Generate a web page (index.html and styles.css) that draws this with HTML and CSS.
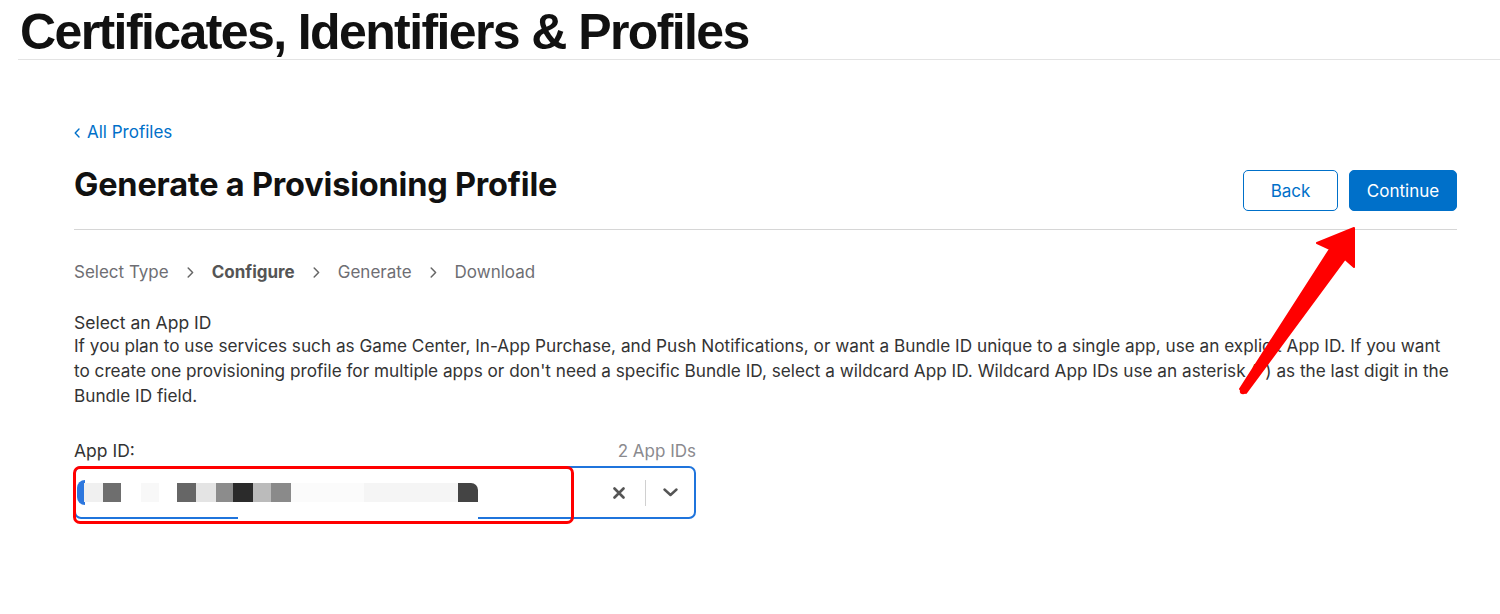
FILE: index.html
```html
<!DOCTYPE html>
<html lang="en">
<head>
<meta charset="utf-8">
<title>Generate a Provisioning Profile</title>
<link rel="stylesheet" href="styles.css">
</head>
<body>
<div class="page">
  <header class="top">
    <h1 class="top-title">Certificates, Identifiers &amp; Profiles</h1>
  </header>

  <main class="main">
    <a class="back-link" href="#">
      <svg class="back-chev" width="6" height="10" viewBox="0 0 6 10"><path d="M5 1 L1.2 5 L5 9" fill="none" stroke="#0070c9" stroke-width="1.4" stroke-linecap="round" stroke-linejoin="round"/></svg>
      All Profiles
    </a>

    <div class="title-row">
      <h2 class="page-title">Generate a Provisioning Profile</h2>
      <div class="actions">
        <button class="btn btn-outline">Back</button>
        <button class="btn btn-primary">Continue</button>
      </div>
    </div>

    <nav class="steps">
      <span class="step">Select Type</span>
      <svg class="step-chev" width="7" height="11" viewBox="0 0 7 11"><path d="M1.2 1 L5.6 5.5 L1.2 10" fill="none" stroke="#666" stroke-width="1.5" stroke-linecap="round" stroke-linejoin="round"/></svg>
      <span class="step step-current">Configure</span>
      <svg class="step-chev" width="7" height="11" viewBox="0 0 7 11"><path d="M1.2 1 L5.6 5.5 L1.2 10" fill="none" stroke="#666" stroke-width="1.5" stroke-linecap="round" stroke-linejoin="round"/></svg>
      <span class="step">Generate</span>
      <svg class="step-chev" width="7" height="11" viewBox="0 0 7 11"><path d="M1.2 1 L5.6 5.5 L1.2 10" fill="none" stroke="#666" stroke-width="1.5" stroke-linecap="round" stroke-linejoin="round"/></svg>
      <span class="step">Download</span>
    </nav>

    <section class="section">
      <h3 class="section-title">Select an App ID</h3>
      <p class="section-text">If you plan to use services such as Game Center, In-App Purchase, and Push Notifications, or want a Bundle ID unique to a single app, use an explicit App ID. If you want to create one provisioning profile for multiple apps or don't need a specific Bundle ID, select a wildcard App ID. Wildcard App IDs use an asterisk (*) as the last digit in the Bundle ID field.</p>
    </section>

    <div class="field">
      <div class="field-head">
        <label class="field-label">App ID:</label>
        <span class="field-count">2 App IDs</span>
      </div>
      <div class="select">
        <div class="select-value">
          <span class="chip-edge"></span>
          <span class="px" style="width:19px;background:#f0f0f0"></span>
          <span class="px" style="width:18px;background:#6e6e6e"></span>
          <span class="px" style="width:20px;background:#fff"></span>
          <span class="px" style="width:18px;background:#f8f8f8"></span>
          <span class="px" style="width:18px;background:#fff"></span>
          <span class="px" style="width:19px;background:#666"></span>
          <span class="px" style="width:20px;background:#e4e4e4"></span>
          <span class="px" style="width:17px;background:#8c8c8c"></span>
          <span class="px" style="width:20px;background:#2b2b2b"></span>
          <span class="px" style="width:18px;background:#bbb"></span>
          <span class="px" style="width:20px;background:#8a8a8a"></span>
          <span class="px" style="width:73px;background:#fbfbfb"></span>
          <span class="px" style="width:94px;background:#f5f5f5"></span>
          <span class="px px-end" style="width:20px;background:#444"></span>
        </div>
        <div class="select-tools">
          <svg class="clear-icon" width="12" height="12" viewBox="0 0 12 12"><path d="M1.5 1.5 L10.5 10.5 M10.5 1.5 L1.5 10.5" stroke="#555" stroke-width="2.6" stroke-linecap="round"/></svg>
          <span class="tool-sep"></span>
          <svg class="drop-icon" width="15" height="9" viewBox="0 0 15 9"><path d="M1.5 1.5 L7.5 7 L13.5 1.5" fill="none" stroke="#555" stroke-width="2.4" stroke-linecap="round" stroke-linejoin="round"/></svg>
        </div>
        <span class="redact-bottom"></span>
      </div>
    </div>
  </main>

  <span class="mark-box"></span>
  <svg class="mark-arrow" width="1500" height="614" viewBox="0 0 1500 614">
    <polygon points="1354,228 1317,243 1330,249 1240,389 1246,393 1345,259 1354,267" fill="#ff0000" stroke="#ff0000" stroke-width="2" stroke-linejoin="round"/>
    <circle cx="1243" cy="391" r="3.2" fill="#ff0000"/>
  </svg>
</div>
</body>
</html>
```

FILE: styles.css
```css
* { box-sizing: border-box; }

html, body {
  margin: 0;
  padding: 0;
  background: #fff;
}

body {
  font-family: Inter, "Liberation Sans", Arial, sans-serif;
  color: #1d1d1f;
  -webkit-font-smoothing: antialiased;
}

.page {
  position: relative;
  width: 1500px;
  height: 614px;
  overflow: hidden;
}

/* top header */
.top {
  margin-left: 18px;
  height: 60px;
  border-bottom: 1px solid #e3e3e3;
}

.top-title {
  margin: 0;
  padding: 5px 0 0 2px;
  font-family: "Liberation Sans", Arial, sans-serif;
  font-weight: 700;
  font-size: 50px;
  line-height: 54px;
  letter-spacing: -1.6px;
  color: #111;
}

/* main */
.main {
  margin-left: 74px;
  width: 1383px;
}

.back-link {
  display: inline-flex;
  align-items: center;
  gap: 7px;
  margin-top: 62px;
  font-size: 17px;
  line-height: 20px;
  color: #0070c9;
  text-decoration: none;
}

.back-chev { margin-top: 2px; }

.title-row {
  display: flex;
  justify-content: space-between;
  align-items: flex-start;
  margin-top: 28px;
  padding-bottom: 18px;
  border-bottom: 1px solid #d6d6d6;
}

.page-title {
  margin: 0;
  font-size: 32.5px;
  line-height: 30px;
  font-weight: 700;
  letter-spacing: -0.2px;
  color: #111;
}

.actions {
  display: flex;
  gap: 11px;
}

.btn {
  height: 41px;
  border-radius: 5px;
  font-family: Inter, "Liberation Sans", Arial, sans-serif;
  font-size: 17px;
  padding: 0;
  cursor: pointer;
}

.btn-outline {
  width: 95px;
  background: #fff;
  border: 1px solid #0070c9;
  color: #0070c9;
}

.btn-primary {
  width: 108px;
  background: #0070c9;
  border: 1px solid #0070c9;
  color: #fff;
}

/* steps */
.steps {
  display: flex;
  align-items: center;
  gap: 18px;
  margin-top: 32px;
  font-size: 17px;
  line-height: 20px;
  color: #6e6e73;
}

.step-current {
  font-weight: 700;
  color: #555;
}

.step-chev { flex: none; }

/* section */
.section {
  margin-top: 30px;
  color: #333;
}

.section-title {
  margin: 0;
  font-size: 17.5px;
  line-height: 21px;
  font-weight: 400;
}

.section-text {
  margin: 0;
  font-size: 17.2px;
  line-height: 25px;
}

/* field */
.field {
  width: 622px;
  margin-top: 33px;
}

.field-head {
  display: flex;
  justify-content: space-between;
  align-items: baseline;
  height: 25px;
}

.field-label {
  font-size: 17.5px;
  line-height: 20px;
  color: #333;
}

.field-count {
  font-size: 17px;
  color: #8a8a8e;
}

.select {
  position: relative;
  display: flex;
  align-items: center;
  height: 53px;
  border: 2px solid #1f74dc;
  border-radius: 7px;
  padding-left: 1px;
}

.select-value {
  flex: 1;
  display: flex;
  align-items: center;
  height: 100%;
}

.chip-edge {
  width: 8px;
  height: 25px;
  border-radius: 13px 0 0 13px;
  background: #2d77de;
  margin-right: -1px;
}

.px {
  height: 19px;
  flex: none;
}

.px-end { border-top-right-radius: 7px; }

.select-tools {
  display: flex;
  align-items: center;
  padding-right: 16px;
}

.clear-icon { margin-right: 20px; }

.tool-sep {
  width: 1px;
  height: 26px;
  background: #d0d0d0;
  margin-right: 17px;
}

.redact-bottom {
  position: absolute;
  left: 162px;
  bottom: -3px;
  width: 240px;
  height: 5px;
  background: #fff;
}

/* annotations */
.mark-box {
  position: absolute;
  left: 73px;
  top: 466px;
  width: 501px;
  height: 58px;
  border: 3px solid #ff0000;
  border-radius: 7px;
}

.mark-arrow {
  position: absolute;
  left: 0;
  top: 0;
  pointer-events: none;
}
```
